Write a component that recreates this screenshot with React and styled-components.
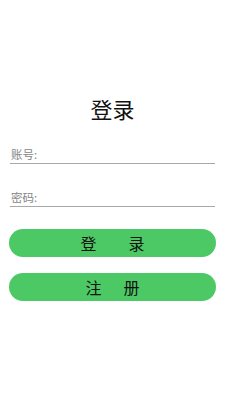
import styled, { createGlobalStyle } from 'styled-components'

const GlobalStyle = createGlobalStyle`
body {
  margin: 0;
  background: #fff;
  font-family: "Noto Sans CJK SC", "Noto Sans", sans-serif;
}
`;

const Page = styled.div`
width: 225px;
height: 400px;
display: flex;
flex-direction: column;
padding: 0 9px;
box-sizing: border-box;
`;

const Title = styled.h1`
margin: 93px 0 0;
font-size: 22px;
font-weight: 400;
line-height: 30px;
text-align: center;
color: #111;
`;

const Field = styled.label`
display: flex;
align-items: flex-end;
margin: ${props => props.first ? "23px" : "25px"} 1px 0;
padding: 0 0 2px 1px;
height: 18px;
box-sizing: border-box;
border-bottom: 1px solid #a8a8a8;
font-size: 11.5px;
line-height: 14px;
color: #858585;
`;

const Input = styled.input`
flex: 1;
min-width: 0;
border: none;
outline: none;
padding: 0;
background: transparent;
font: inherit;
`;

const Button = styled.button`
width: 100%;
height: 28px;
margin-top: ${props => props.first ? "22px" : "16px"};
border: none;
border-radius: 14px;
background-color: #4cc964;
color: #111;
font-family: inherit;
font-size: 16px;
letter-spacing: ${props => props.spacing};
padding: 0 0 0 ${props => props.spacing};
cursor: pointer;
`;

const App = () => {
  return (
    <Page>
      <GlobalStyle/>
      <Title>登录</Title>
      <Field first>账号:<Input type="text"/></Field>
      <Field>密码:<Input type="password"/></Field>
      <Button first spacing="32px">登录</Button>
      <Button spacing="22px">注册</Button>
    </Page>
  );
};

export default App;
